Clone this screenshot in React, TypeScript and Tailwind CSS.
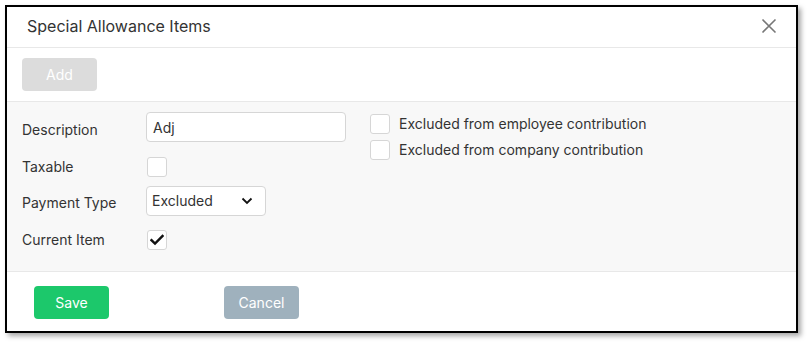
import React from "react";

function Check() {
  return (
    <svg width="14" height="12" viewBox="0 0 14 12" fill="none">
      <path d="M1.5 6.2 L5 9.6 L12.5 2" stroke="#111" strokeWidth="2.4" strokeLinecap="square" />
    </svg>
  );
}

export default function App() {
  return (
    <div className="w-[807px] h-[342px] bg-white pt-[5px] pl-[5px]" style={{ fontFamily: "Inter, 'Noto Sans', sans-serif" }}>
      <div className="w-[793px] h-[328px] border-2 border-black bg-white shadow-[3px_3px_5px_rgba(0,0,0,0.35)] flex flex-col text-[#333]">
        <div className="h-[41px] flex items-center justify-between pl-[20px] pr-[20px] border-b border-[#e8e8e8]">
          <span className="text-[16px] text-[#333] pb-[3px]">Special Allowance Items</span>
          <svg width="16" height="16" viewBox="0 0 16 16" className="mr-[-1px] mb-[3px]">
            <path d="M1.5 1.5 L14.5 14.5 M14.5 1.5 L1.5 14.5" stroke="#777" strokeWidth="1.6" />
          </svg>
        </div>
        <div className="h-[54px] flex items-center pl-[15px] border-b border-[#e8e8e8]">
          <button className="w-[75px] h-[33px] rounded-[4px] bg-[#dcdcdc] text-white text-[14px]">Add</button>
        </div>
        <div className="h-[170px] bg-[#f8f8f8] border-b border-[#e8e8e8] flex pl-[15px] pt-[10px] text-[14px]">
          <div className="flex flex-col">
            <div className="flex items-center h-[30px]">
              <span className="w-[124px] pt-[4px]">Description</span>
              <div className="w-[200px] h-[30px] bg-white border border-[#d6d6d6] rounded-[4px] flex items-center pl-[6px]">Adj</div>
            </div>
            <div className="flex items-center h-[20px] mt-[15px]">
              <span className="w-[125px] pb-[1px]">Taxable</span>
              <div className="w-[20px] h-[20px] bg-white border border-[#d6d6d6] rounded-[3px]" />
            </div>
            <div className="flex items-center h-[30px] mt-[9px]">
              <span className="w-[124px] pt-[2px]">Payment Type</span>
              <div className="w-[120px] h-[30px] bg-white border border-[#d6d6d6] rounded-[4px] flex items-center justify-between pl-[5px] pr-[12px]">
                <span className="pb-[2px]">Excluded</span>
                <svg width="12" height="8" viewBox="0 0 12 8">
                  <path d="M1.5 1.5 L6 6 L10.5 1.5" stroke="#111" strokeWidth="1.8" fill="none" />
                </svg>
              </div>
            </div>
            <div className="flex items-center h-[20px] mt-[14px]">
              <span className="w-[125px] pb-[1px]">Current Item</span>
              <div className="w-[20px] h-[20px] bg-white border border-[#d6d6d6] rounded-[3px] flex items-center justify-center">
                <Check />
              </div>
            </div>
          </div>
          <div className="flex flex-col ml-[24px] pt-[2px] gap-[6px]">
            <div className="flex items-center h-[20px]">
              <div className="w-[20px] h-[20px] bg-white border border-[#d6d6d6] rounded-[3px]" />
              <span className="ml-[9px] pb-[2px]">Excluded from employee contribution</span>
            </div>
            <div className="flex items-center h-[20px]">
              <div className="w-[20px] h-[20px] bg-white border border-[#d6d6d6] rounded-[3px]" />
              <span className="ml-[9px] pb-[2px]">Excluded from company contribution</span>
            </div>
          </div>
        </div>
        <div className="flex-1 flex items-start pt-[14px] pl-[27px] gap-[115px]">
          <button className="w-[75px] h-[33px] rounded-[4px] bg-[#1cc86b] text-white text-[14px]">Save</button>
          <button className="w-[75px] h-[33px] rounded-[4px] bg-[#9fb1bd] text-white text-[14px]">Cancel</button>
        </div>
      </div>
    </div>
  );
}
